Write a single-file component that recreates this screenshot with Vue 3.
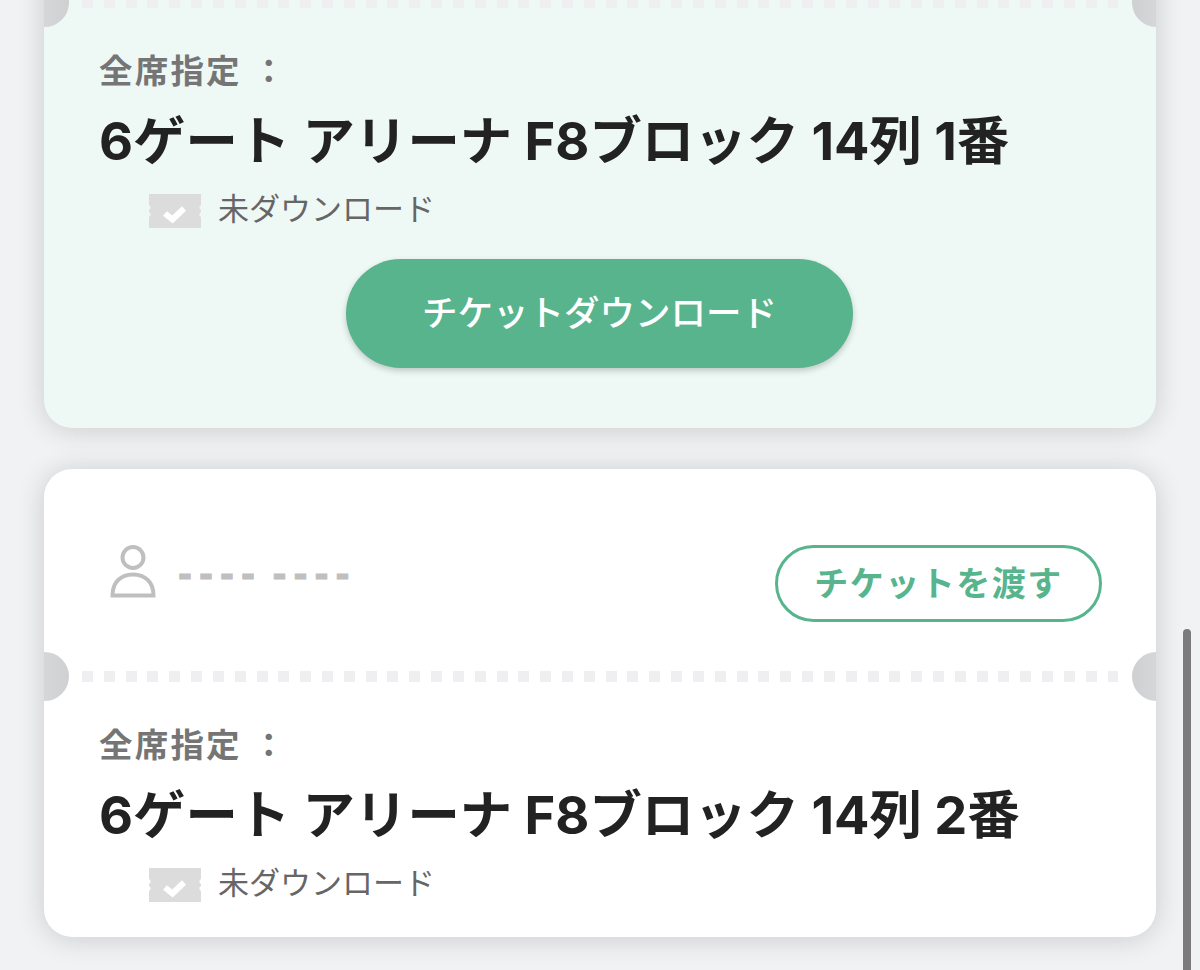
<script setup>
const tickets = [
  { seat: '6ゲート アリーナ F8ブロック 14列 1番', active: true },
  { seat: '6ゲート アリーナ F8ブロック 14列 2番', active: false },
]
</script>

<template>
  <div class="page">
    <section v-for="t in tickets" :key="t.seat" class="card" :class="{ active: t.active }">
      <div class="head">
        <template v-if="!t.active">
          <div class="owner">
            <svg class="person" viewBox="0 0 46 53" width="46" height="53" aria-hidden="true">
              <circle cx="23" cy="12.5" r="10.5" fill="none" stroke="#bfbfbf" stroke-width="4" />
              <path d="M2.500 50.500 C2.500 37 11 29.500 23 29.500 C35 29.500 43.500 37 43.500 50.500 Z" fill="none" stroke="#bfbfbf" stroke-width="4" />
            </svg>
            <span class="name">---- ----</span>
          </div>
          <button class="transfer" type="button"><span class="lift">チケットを渡す</span></button>
        </template>
      </div>
      <div class="dashes"></div>
      <i class="notch left"></i>
      <i class="notch right"></i>
      <div class="body" :class="{ compact: !t.active }">
        <div class="label">全席指定 ：</div>
        <div class="seat">{{ t.seat }}</div>
        <div class="status">
          <svg viewBox="0 0 52 34" width="52" height="34" aria-hidden="true">
            <path d="M0 0H52V11L50.500 12.500V14.500L52 16V18L50.500 19.500V21.500L52 23V34H0V23L1.500 21.500V19.500L0 18V16L1.500 14.500V12.500L0 11Z" fill="#dcdcdc" />
            <path d="M16 19.500L23.500 25.500L35 14.500" fill="none" stroke="#fff" stroke-width="6" />
          </svg>
          <span class="status-text">未ダウンロード</span>
        </div>
        <button v-if="t.active" class="download" type="button"><span class="lift">チケットダウンロード</span></button>
      </div>
    </section>
    <div class="scrollbar"></div>
  </div>
</template>

<style>
html, body { margin: 0; background: #f1f2f4; }
</style>

<style scoped>
.page {
  position: relative;
  height: 970px;
  overflow: hidden;
  padding: 0 44px;
  box-sizing: border-box;
  background: #f1f2f4;
  font-family: Inter, "Noto Sans CJK JP", sans-serif;
}
.card {
  position: relative;
  overflow: hidden;
  background: #fff;
  border-radius: 28px;
  box-shadow: 0 2px 28px rgba(0, 0, 0, 0.16);
  margin-bottom: 41px;
}
.card:first-of-type { margin-top: -205px; }
.card.active { background: #eef9f5; }
.head {
  height: 202px;
  box-sizing: border-box;
  padding: 76px 54px 0 66px;
  display: flex;
  justify-content: space-between;
  align-items: flex-start;
}
.owner { display: flex; align-items: flex-start; gap: 22px; }
.person { display: block; }
.name {
  font-family: "Liberation Sans", sans-serif;
  font-size: 42px;
  font-weight: 700;
  line-height: 52px;
  letter-spacing: 7px;
  word-spacing: -8px;
  color: #bfbfbf;
  -webkit-text-stroke: 0.8px #bfbfbf;
  padding-top: 3px;
}
.transfer {
  width: 327px;
  height: 77px;
  box-sizing: border-box;
  border: 3px solid #57b48d;
  border-radius: 39px;
  background: #fff;
  color: #57b48d;
  font: 700 34px/1 "Noto Sans CJK JP", sans-serif;
  letter-spacing: 1.500px;
  padding: 0 0 4px;
}
.lift { display: block; }
.dashes {
  height: 11px;
  margin: 0 37.700px;
  background: repeating-linear-gradient(90deg, #efeff1 0 11px, transparent 11px 21.820px);
}
.notch {
  position: absolute;
  top: 182.500px;
  width: 49px;
  height: 49px;
  border-radius: 50%;
}
.notch.left { left: -24.500px; background: linear-gradient(90deg, #dcdddf, #cfd0d2); }
.notch.right { right: -24.500px; background: linear-gradient(90deg, #cfd0d2, #dcdddf); }
.body { padding: 41px 0 60px 55px; }
.body.compact { padding-bottom: 34px; }
.label {
  font-size: 33.500px;
  font-weight: 700;
  line-height: 44px;
  letter-spacing: 2.200px;
  color: #757575;
}
.seat {
  margin-top: 18px;
  font-size: 52.400px;
  font-weight: 700;
  line-height: 60px;
  color: #222;
}
.status {
  margin: 18px 0 0 50px;
  height: 40px;
  display: flex;
  align-items: center;
  gap: 17px;
  font-size: 31px;
  color: #666;
}
.status svg { margin-top: 4px; }
.status-text { padding-bottom: 6px; }
.download {
  display: block;
  width: 507px;
  height: 109px;
  margin: 30px 0 0 247px;
  border: 0;
  border-radius: 55px;
  background: #57b48d;
  color: #fff;
  font: 500 35.500px/1 "Noto Sans CJK JP", sans-serif;
  box-shadow: 0 3px 6px rgba(0, 0, 0, 0.2);
  padding: 0 0 5px;
}
.scrollbar {
  position: absolute;
  left: 1183px;
  top: 629px;
  bottom: -10px;
  width: 8px;
  border-radius: 4px;
  background: #7b7b7d;
}
</style>
